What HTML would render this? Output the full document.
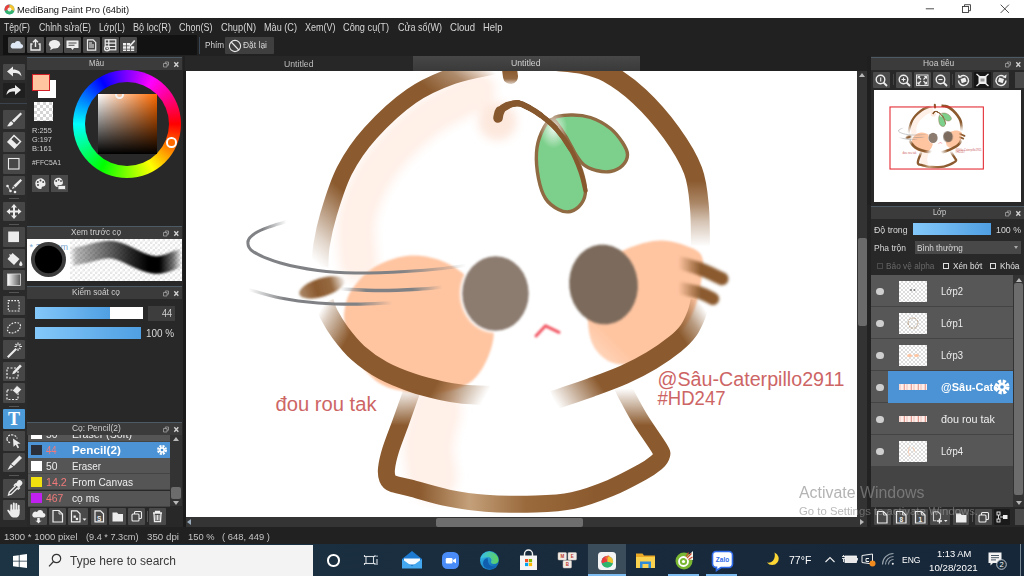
<!DOCTYPE html>
<html><head><meta charset="utf-8"><title>MediBang Paint Pro</title>
<style>
*{box-sizing:border-box;margin:0;padding:0}
html,body{width:1024px;height:576px;overflow:hidden;background:#222;font-family:"Liberation Sans",sans-serif;}
.a{position:absolute}
.t{position:absolute;white-space:nowrap;line-height:1}
#titlebar{left:0;top:0;width:1024px;height:18px;background:#fff}
#menubar{left:0;top:18px;width:1024px;height:18px;background:#212121}
#menubar span{position:absolute;top:4px;font-size:10.4px;color:#d8d8d8;white-space:nowrap;line-height:1;transform-origin:0 0}
#toolrow{left:0;top:35px;width:1024px;height:21px;background:#212121}
.tb{position:absolute;top:2px;width:17px;height:16px;background:#4a4a4a;border-radius:1px}
.hdr{position:absolute;height:13px;background:#3b3b3b;border-top:1px solid #4c5a66;color:#cfcfcf;font-size:10px;text-align:center;line-height:12px}
.hdr i{position:absolute;right:4px;top:1px;font-style:normal;font-size:8px;color:#ddd;letter-spacing:3px}
.panel{position:absolute;background:#282828}
.tool{position:absolute;left:3px;width:22px;height:19px;background:#474747;border-radius:1px}
.tool svg{position:absolute;left:0;top:0}
.tsep{position:absolute;left:9px;width:10px;height:1px;background:#555}
.brow{position:absolute;left:28px;width:142px;height:16px;background:#555;border-bottom:1px solid #444;font-size:11px;color:#eee;line-height:16px}
.brow b.sq{position:absolute;left:3px;top:2.5px;width:11px;height:10px}
.brow .n{position:absolute;left:18px}
.brow .nm{position:absolute;left:43.5px}
.sb{position:absolute;width:17px;height:16.5px;background:#4a4a4a;border-radius:1px}
.lrow{position:absolute;left:871px;width:142px;height:32px;background:#575757;border-bottom:1px solid #444;color:#eee;font-size:11.5px}
.lrow .eye{position:absolute;left:5px;top:12.5px;width:7.5px;height:7.5px;border-radius:50%;background:#cfcfcf}
.lrow .th{position:absolute;left:28px;top:5.5px;width:28px;height:21px;background-color:#fff;background-image:linear-gradient(45deg,#ddd 25%,transparent 25%,transparent 75%,#ddd 75%),linear-gradient(45deg,#ddd 25%,transparent 25%,transparent 75%,#ddd 75%);background-size:4px 4px;background-position:0 0,2px 2px}
.lrow .nm{position:absolute;left:70px;top:10px;line-height:1;white-space:nowrap}
.chk{background-color:#fff;background-image:linear-gradient(45deg,#d4d4d4 25%,transparent 25%,transparent 75%,#d4d4d4 75%),linear-gradient(45deg,#d4d4d4 25%,transparent 25%,transparent 75%,#d4d4d4 75%);background-size:6px 6px;background-position:0 0,3px 3px}
.tk{position:absolute;top:544px;height:32px}
</style></head><body>

<!-- ======= title bar ======= -->
<div class="a" id="titlebar">
  <svg class="a" style="left:4px;top:4px" width="11" height="11" viewBox="0 0 11 11"><circle cx="5.5" cy="5.5" r="5" fill="#2b9bd6"/><path d="M5.5 .5A5 5 0 0 0 .8 7L5.5 5.5Z" fill="#e8413a"/><path d="M5.5 .5A5 5 0 0 1 10.2 7L5.5 5.5Z" fill="#f4c430"/><path d="M.8 7A5 5 0 0 0 10.2 7L5.5 5.5Z" fill="#33b36b"/><circle cx="5.5" cy="5.5" r="2" fill="#fff" opacity=".85"/></svg>
  <div class="t" style="left:17.00px;top:4.61px;font-size:9.6px;color:#111;transform-origin:0 50%;transform:scaleX(0.9723);">MediBang Paint Pro (64bit)</div>
  <svg class="a" style="left:900px;top:0" width="124" height="18" viewBox="900 0 124 18" fill="none" stroke="#3a3a3a" stroke-width="0.9"><path d="M925.8 8.800h8.200"/><rect x="962.500" y="6.500" width="6" height="6"/><path d="M964.500 6.500v-1.800h6v6h-2"/><path d="M1000.700 4.700l8.200 8.200M1008.900 4.700l-8.200 8.200"/></svg>
</div>

<!-- ======= menu bar ======= -->
<div class="a" id="menubar"><div class="t" style="left:4.00px;top:3.52px;font-size:10.6px;color:#d6d6d6;transform-origin:0 50%;transform:scaleX(0.8181);">Tệp(F)</div><div class="t" style="left:38.50px;top:3.52px;font-size:10.6px;color:#d6d6d6;transform-origin:0 50%;transform:scaleX(0.8250);">Chỉnh sửa(E)</div><div class="t" style="left:98.50px;top:3.52px;font-size:10.6px;color:#d6d6d6;transform-origin:0 50%;transform:scaleX(0.8205);">Lớp(L)</div><div class="t" style="left:132.50px;top:3.52px;font-size:10.6px;color:#d6d6d6;transform-origin:0 50%;transform:scaleX(0.8606);">Bộ lọc(R)</div><div class="t" style="left:178.50px;top:3.52px;font-size:10.6px;color:#d6d6d6;transform-origin:0 50%;transform:scaleX(0.8491);">Chọn(S)</div><div class="t" style="left:220.50px;top:3.52px;font-size:10.6px;color:#d6d6d6;transform-origin:0 50%;transform:scaleX(0.8740);">Chụp(N)</div><div class="t" style="left:263.50px;top:3.52px;font-size:10.6px;color:#d6d6d6;transform-origin:0 50%;transform:scaleX(0.8624);">Màu (C)</div><div class="t" style="left:304.50px;top:3.52px;font-size:10.6px;color:#d6d6d6;transform-origin:0 50%;transform:scaleX(0.8494);">Xem(V)</div><div class="t" style="left:343.00px;top:3.52px;font-size:10.6px;color:#d6d6d6;transform-origin:0 50%;transform:scaleX(0.8682);">Công cụ(T)</div><div class="t" style="left:397.50px;top:3.52px;font-size:10.6px;color:#d6d6d6;transform-origin:0 50%;transform:scaleX(0.8490);">Cửa sổ(W)</div><div class="t" style="left:449.50px;top:3.52px;font-size:10.6px;color:#d6d6d6;transform-origin:0 50%;transform:scaleX(0.9029);">Cloud</div><div class="t" style="left:483.00px;top:3.52px;font-size:10.6px;color:#d6d6d6;transform-origin:0 50%;transform:scaleX(0.8946);">Help</div></div>

<!-- ======= tool row ======= -->
<div class="a" id="toolrow">
  <div class="a" style="left:3px;top:0;width:194px;height:20px;background:#121212"></div>
  <div class="tb" style="left:8px"><svg width="17" height="16" viewBox="0 0 17 16"><path d="M4.5 11.5h8.2a2.3 2.3 0 0 0 .3-4.6a3.3 3.3 0 0 0-6.3-.8a2.7 2.7 0 0 0-2.2 5.4z" fill="#dfe9f5"/></svg></div>
  <div class="tb" style="left:27px"><svg width="17" height="16" viewBox="0 0 17 16" fill="none" stroke="#eee" stroke-width="1.4"><path d="M5.5 7H4v6h9V7h-1.5M8.5 10V3M6 5.2l2.5-2.5L11 5.2"/></svg></div>
  <div class="tb" style="left:46px"><svg width="17" height="16" viewBox="0 0 17 16"><ellipse cx="8.5" cy="7.3" rx="5.6" ry="4.2" fill="#eee"/><path d="M5 10l-.8 3.2L8 11z" fill="#eee"/></svg></div>
  <div class="tb" style="left:64px"><svg width="17" height="16" viewBox="0 0 17 16"><path d="M2.5 3.5h12v7.5h-4.5L8.5 13L7 11H2.5z" fill="#eee"/><path d="M4.5 6h8M4.5 8.3h6" stroke="#4a4a4a" stroke-width="1.1"/></svg></div>
  <div class="tb" style="left:83px"><svg width="17" height="16" viewBox="0 0 17 16"><path d="M4.5 2.8h5.6l2.6 2.6v7.8H4.5z" fill="none" stroke="#eee" stroke-width="1.2"/><path d="M6 8h5M6 10h5M6 6h3" stroke="#eee" stroke-width="1"/></svg></div>
  <div class="tb" style="left:102px"><svg width="17" height="16" viewBox="0 0 17 16" fill="none" stroke="#eee" stroke-width="1.2"><rect x="3.2" y="2.8" width="10.6" height="10"/><path d="M3.2 6.2h10.6M3.2 9.5h10.6M6.8 2.8v10"/><circle cx="5" cy="11.5" r="2.4" fill="#4a4a4a"/><path d="M5 10.3v1.3h1"/></svg></div>
  <div class="tb" style="left:120px"><svg width="17" height="16" viewBox="0 0 17 16"><path d="M3 6h3.2v2.4H3zM7 6h3.2v2.4H7zM3 9.3h3.2v2.4H3zM7 9.3h3.2v2.4H7zM3 12.6h3.2v1.4H3zM7 12.6h3.2v1.4H7zM11 9.3h3.2v2.4H11zM11 12.6h3.2v1.4H11z" fill="#eee"/><path d="M9.5 8.2l4.6-5.3 1.2 1-4.6 5.3-1.6.5z" fill="#eee"/></svg></div>
  <div class="a" style="left:198.5px;top:2px;width:1.5px;height:17px;background:#3a4856"></div>
  <div class="t" style="left:205.00px;top:5.41px;font-size:9.4px;color:#d5d5d5;transform-origin:0 50%;transform:scaleX(0.8680);">Phím</div>
  <div class="a" style="left:225px;top:2px;width:49px;height:16.5px;background:#3f3f3f;border-radius:1px">
    <svg class="a" style="left:3px;top:1.5px" width="14" height="14" viewBox="0 0 14 14" fill="none" stroke="#e8e8e8" stroke-width="1.1"><circle cx="7" cy="7" r="5.6"/><path d="M3.2 3L10.8 11"/></svg>
    <div class="t" style="left:18.00px;top:3.60px;font-size:9.0px;color:#d5d5d5;transform-origin:0 50%;transform:scaleX(0.9406);">Đặt lại</div>
  </div>
</div>

<!-- tab strip -->
<div class="a" style="left:0;top:56px;width:1024px;height:15px;background:#212121"></div>
<div class="a" style="left:185px;top:56px;width:228px;height:15px;background:#272727;"><div class="t" style="left:99.00px;top:3.60px;font-size:9.0px;color:#bdbdbd;transform-origin:0 50%;transform:scaleX(0.9667);">Untitled</div></div>
<div class="a" style="left:413px;top:56px;width:227px;height:15px;background:linear-gradient(#474747,#3a3a3a);"><div class="t" style="left:98.00px;top:3.10px;font-size:9.0px;color:#d0d0d0;transform-origin:0 50%;transform:scaleX(0.9667);">Untitled</div></div>

<!-- ======= left tool column ======= -->
<div class="panel" style="left:0;top:56px;width:27px;height:471px;background:#2a2a2a" id="tools">
<div class="tool" style="top:7.799999999999997px;height:16.6px;background:#474747"><svg width="22" height="16.6" viewBox="0 1.5 22 16.6"><path d="M4 9l6-5v3c5 0 8 2 8.500 7c-2-3-4.500-3.500-8.500-3.500v3.500z" fill="#ececec"/></svg></div>
<div class="tool" style="top:26.799999999999997px;height:15.6px;background:#1f1f1f"><svg width="22" height="15.6" viewBox="0 2 22 15.6"><path d="M18 9l-6-5v3c-5 0-8 2-8.500 7c2-3 4.500-3.500 8.500-3.500v3.500z" fill="#ececec"/></svg></div>
<div class="tool" style="top:53.5px;height:19.5px;background:#474747"><svg width="22" height="19.5" viewBox="0 0 22 19.5"><path d="M17.500 2.500l1.500 1.500-8 8.500-2-2z" fill="#ececec"/><path d="M8.300 11.200l2 2c-1 2.500-3.500 3.300-6.300 3 1.500-1 1.500-3.500 4.300-5z" fill="#ececec"/></svg></div>
<div class="tool" style="top:76px;height:19.5px;background:#474747"><svg width="22" height="19.5" viewBox="0 0 22 19.5"><path d="M11 3.500l6.500 6-6 6.500-6.500-6z" fill="none" stroke="#ececec" stroke-width="1.500"/><path d="M8 7l6.500 6-3 3-6.500-6z" fill="#ececec"/></svg></div>
<div class="tool" style="top:98px;height:19.5px;background:#474747"><svg width="22" height="19.5" viewBox="0 0 22 19.5"><rect x="5.500" y="4.500" width="10.500" height="10.500" fill="none" stroke="#ececec" stroke-width="1.100"/></svg></div>
<div class="tool" style="top:119.5px;height:19.5px;background:#474747"><svg width="22" height="19.5" viewBox="0 0 22 19.5"><path d="M17.500 3l1.500 1.500-6.500 7-2-2z" fill="#ececec"/><path d="M10 10.300l1.800 1.800-2.800 1z" fill="#ececec"/><circle cx="4.500" cy="10" r="1.300" fill="#ececec"/><circle cx="7.500" cy="15" r="1.300" fill="#ececec"/><circle cx="12" cy="16" r="1.300" fill="#ececec"/><path d="M4.500 10l3 5" stroke="#ececec" stroke-width=".7"/></svg></div>
<div class="tool" style="top:145.5px;height:19.5px;background:#474747"><svg width="22" height="19.5" viewBox="0 0 22 19.5"><path d="M11 2l3 3.500h-2v3h3v-2l3.500 3-3.500 3v-2h-3v3h2l-3 3.500-3-3.500h2v-3h-3v2l-3.500-3 3.500-3v2h3v-3h-2z" fill="#ececec"/></svg></div>
<div class="tool" style="top:171px;height:19.5px;background:#474747"><svg width="22" height="19.5" viewBox="0 0 22 19.5"><rect x="5.200" y="4.500" width="10.800" height="10.600" fill="#ececec"/></svg></div>
<div class="tool" style="top:192.5px;height:19.5px;background:#474747"><svg width="22" height="19.5" viewBox="0 0 22 19.5"><path d="M9.500 4l7 6-5.500 6-6.500-6z" fill="#ececec"/><path d="M6.500 5.500l4 3.500" stroke="#ececec" stroke-width="1.200" fill="none"/><path d="M17.800 12c1 1.600 1.600 2.600 1.600 3.400a1.600 1.600 0 0 1-3.200 0c0-.8.600-1.800 1.600-3.400z" fill="#ececec"/></svg></div>
<div class="tool" style="top:214px;height:19.5px;background:#474747"><svg width="22" height="19.5" viewBox="0 0 22 19.5"><defs><linearGradient id="tg"><stop offset="0" stop-color="#fff"/><stop offset="1" stop-color="#555"/></linearGradient></defs><rect x="4.500" y="4" width="13" height="11.500" fill="url(#tg)" stroke="#ddd" stroke-width=".8"/></svg></div>
<div class="tool" style="top:239.8px;height:19.5px;background:#474747"><svg width="22" height="19.5" viewBox="0 0 22 19.5"><rect x="5.300" y="4.600" width="10.800" height="10.400" fill="none" stroke="#ececec" stroke-width="1.150" stroke-dasharray="1.700 1.300"/></svg></div>
<div class="tool" style="top:261.8px;height:19.5px;background:#474747"><svg width="22" height="19.5" viewBox="0 0 22 19.5"><ellipse cx="11" cy="9.800" rx="7" ry="4.600" transform="rotate(-28 11 9.800)" fill="none" stroke="#ececec" stroke-width="1.150" stroke-dasharray="1.700 1.300"/></svg></div>
<div class="tool" style="top:283.8px;height:19.5px;background:#474747"><svg width="22" height="19.5" viewBox="0 0 22 19.5"><path d="M4 16.500l8.500-8.500 1.500 1.500-8.500 8.500z" fill="#ececec"/><path d="M15 2.500v3M15 8.500v2.500M11.500 6.500h2.300M16.500 6.500h2.500M12.500 4l1.300 1.300M17.500 4l-1.300 1.300M17.500 9.200l-1.300-1.300" stroke="#ececec" stroke-width="1.100"/></svg></div>
<div class="tool" style="top:305.5px;height:19.5px;background:#474747"><svg width="22" height="19.5" viewBox="0 0 22 19.5"><rect x="4" y="6" width="11" height="10" fill="none" stroke="#ececec" stroke-width="1.200" stroke-dasharray="2 1.500"/><path d="M17 2.500l1.800 1.800-7 7.200-2.600.8.800-2.600z" fill="#ececec"/></svg></div>
<div class="tool" style="top:327.3px;height:19.5px;background:#474747"><svg width="22" height="19.5" viewBox="0 0 22 19.5"><rect x="4" y="7" width="11" height="9.500" fill="none" stroke="#ececec" stroke-width="1.200" stroke-dasharray="2 1.500"/><path d="M14 2.500l4.500 4-4.500 5-4.500-4z" fill="#ececec" stroke="#474747" stroke-width=".6"/></svg></div>
<div class="tool" style="top:353px;height:19.5px;background:#4d9ad9"><svg width="22" height="19.5" viewBox="0 0 22 19.5"><text x="11" y="16" text-anchor="middle" font-family="Liberation Serif, serif" font-weight="bold" font-size="18" fill="#fff">T</text></svg></div>
<div class="tool" style="top:375px;height:19.5px;background:#474747"><svg width="22" height="19.5" viewBox="0 0 22 19.5"><path d="M4 8c0-3 3-4.500 6-4 2.500.5 4 2 4 3.500" fill="none" stroke="#ececec" stroke-width="1.200" stroke-dasharray="2 1.200"/><path d="M4 8c0 2 1.500 3.500 4 4" fill="none" stroke="#ececec" stroke-width="1.200" stroke-dasharray="2 1.200"/><path d="M10 7.500l7.500 5-3.200.5 1.800 3.500-1.500.7-1.800-3.500-2.300 2z" fill="#ececec"/></svg></div>
<div class="tool" style="top:396.5px;height:19.5px;background:#474747"><svg width="22" height="19.5" viewBox="0 0 22 19.5"><path d="M16.500 2.500l2.500 2.500-8 8-3-2z" fill="#ececec"/><path d="M7.500 11.500l2.700 2.200-5.700 3.300z" fill="#ececec"/></svg></div>
<div class="tool" style="top:422.5px;height:19.5px;background:#474747"><svg width="22" height="19.5" viewBox="0 0 22 19.5"><path d="M15 2.500a2 2 0 0 1 3 3l-2.500 2.500 1 1-1.200 1.200-1-1-6 6-2.800.8.800-2.800 6-6-1-1 1.200-1.200 1 1z" fill="none" stroke="#ececec" stroke-width="1.300"/><path d="M15 2.500a2 2 0 0 1 3 3l-2.800 2.800-3-3z" fill="#ececec"/></svg></div>
<div class="tool" style="top:444px;height:19.5px;background:#474747"><svg width="22" height="19.5" viewBox="0 0 22 19.5"><path d="M8.300 10V5.200M10.800 10V3.400M13.300 10V3.900M15.700 10V5.800" stroke="#ececec" stroke-width="1.900" stroke-linecap="round" fill="none"/><path d="M7.300 9.500h9.400v3.300c0 2.600-1.500 4.700-3 4.700h-3.500c-1.200 0-2.300-1-3.200-2.500l-2.600-4c-.6-1 .6-1.900 1.500-1l1.400 1.600z" fill="#ececec"/></svg></div>
<div class="a" style="left:0;top:47px;width:27px;height:1px;background:#3b444e"></div><div class="tsep" style="top:142px"></div><div class="tsep" style="top:167.5px"></div><div class="tsep" style="top:235.5px"></div><div class="tsep" style="top:349.5px"></div><div class="tsep" style="top:419px"></div>
</div>

<!-- ======= colour panel ======= -->
<div class="panel" style="left:27px;top:56px;width:156px;height:169px"></div>
<div class="hdr" style="left:27px;top:56.5px;width:155px"><div class="t" style="left:61.80px;top:1.76px;font-size:9.3px;color:#cfcfcf;transform-origin:0 50%;transform:scaleX(0.8290);">Màu</div><svg class="a" style="right:1px;top:2px" width="20" height="9" viewBox="0 0 20 9"><path d="M2.500 3.500h3.500v3.500h-3.500zM4.300 3.500v-1.500h3.200v3.200h-1.500" fill="none" stroke="#a8a8a8" stroke-width=".75"/><path d="M13.300 2.300l4 4.400M17.300 2.300l-4 4.400" stroke="#d2d2d2" stroke-width="1.350"/></svg></div>
<div class="a" style="left:38px;top:80px;width:17.5px;height:17.5px;background:#fff"></div>
<div class="a" style="left:31.5px;top:73.5px;width:18px;height:17.5px;background:#ffc5a1;border:1.6px solid #d22028"></div>
<div class="a chk" style="left:34px;top:102px;width:19px;height:19px"></div>
<div class="t" style="left:31.80px;top:127.09px;font-size:8.0px;color:#cfcfcf;transform-origin:0 50%;transform:scaleX(0.9317);">R:255</div><div class="t" style="left:31.80px;top:136.09px;font-size:8.0px;color:#cfcfcf;transform-origin:0 50%;transform:scaleX(0.9130);">G:197</div><div class="t" style="left:31.80px;top:145.09px;font-size:8.0px;color:#cfcfcf;transform-origin:0 50%;transform:scaleX(0.9519);">B:161</div>
<div class="t" style="left:32.30px;top:158.89px;font-size:7.6px;color:#cfcfcf;transform-origin:0 50%;transform:scaleX(0.8923);">#FFC5A1</div>
<div class="a" style="left:32px;top:174.5px;width:17px;height:17px;background:#4a4a4a"><svg width="17" height="17" viewBox="0 0 17 17"><path d="M8.7 3.2a5.4 5.4 0 1 0 0 10.8c1.5 0 .6-1.4 1.2-2.1.8-.9 3.6.3 3.6-3.2 0-3.2-2.4-5.5-4.8-5.5z" fill="#eee"/><circle cx="5.8" cy="7" r="1" fill="#4a4a4a"/><circle cx="8.5" cy="5.6" r="1" fill="#4a4a4a"/><circle cx="11.2" cy="7" r="1" fill="#4a4a4a"/><circle cx="6" cy="10" r="1" fill="#4a4a4a"/></svg></div>
<div class="a" style="left:51px;top:174.5px;width:17px;height:17px;background:#4a4a4a"><svg width="17" height="17" viewBox="0 0 17 17"><path d="M7.7 2.7a4.8 4.8 0 1 0 0 9.6c1.3 0 .5-1.2 1-1.9.7-.8 3.2.3 3.2-2.8 0-2.9-2.1-4.9-4.2-4.9z" fill="#eee"/><circle cx="5.2" cy="6" r=".9" fill="#4a4a4a"/><circle cx="7.6" cy="4.8" r=".9" fill="#4a4a4a"/><circle cx="10" cy="6" r=".9" fill="#4a4a4a"/><rect x="7" y="10.5" width="7.5" height="4" fill="#eee" stroke="#4a4a4a" stroke-width=".7"/></svg></div>
<!-- wheel -->
<div class="a" style="left:73px;top:69.8px;width:108px;height:108px;border-radius:50%;background:conic-gradient(from 90deg,#f00,#ff0,#0f0,#0ff,#00f,#f0f,#f00)"></div>
<div class="a" style="left:84.8px;top:81.6px;width:84.4px;height:84.4px;border-radius:50%;background:#282828"></div>
<div class="a" style="left:97.5px;top:94px;width:59.5px;height:59.5px;overflow:hidden;background:linear-gradient(to bottom,rgba(0,0,0,0),#000),linear-gradient(to right,#fff,#ff6a00)"><div class="a" style="left:17.3px;top:-4.2px;width:9.6px;height:9.6px;border-radius:50%;border:2px solid #f2f2f2"></div></div>
<div class="a" style="left:166px;top:137px;width:10.5px;height:10.5px;border-radius:50%;border:2.2px solid #fff;background:#ff6a00"></div>

<!-- ======= brush preview ======= -->
<div class="panel" style="left:27px;top:225px;width:156px;height:60px"></div>
<div class="hdr" style="left:27px;top:225.5px;width:155px"><div class="t" style="left:44.00px;top:1.76px;font-size:9.3px;color:#cfcfcf;transform-origin:0 50%;transform:scaleX(0.8811);">Xem trước cọ</div><svg class="a" style="right:1px;top:2px" width="20" height="9" viewBox="0 0 20 9"><path d="M2.500 3.500h3.500v3.500h-3.500zM4.300 3.500v-1.500h3.200v3.200h-1.500" fill="none" stroke="#a8a8a8" stroke-width=".75"/><path d="M13.300 2.300l4 4.400M17.300 2.300l-4 4.400" stroke="#d2d2d2" stroke-width="1.350"/></svg></div>
<div class="a" style="left:27px;top:238.5px;width:155px;height:42.5px;background:#fff"></div>
<div class="a chk" style="left:69.5px;top:238.5px;width:112.5px;height:42.5px;background-size:5px 5px;background-position:0 0,2.5px 2.5px;background-image:linear-gradient(45deg,#e6e6e6 25%,transparent 25%,transparent 75%,#e6e6e6 75%),linear-gradient(45deg,#e6e6e6 25%,transparent 25%,transparent 75%,#e6e6e6 75%)"></div>
<svg class="a" style="left:27px;top:238px" width="156" height="44" viewBox="27 238 156 44">
  <defs><linearGradient id="bs" gradientUnits="userSpaceOnUse" x1="70" y1="0" x2="182" y2="0"><stop offset="0" stop-color="#000" stop-opacity="0"/><stop offset=".06" stop-color="#000" stop-opacity=".28"/><stop offset=".3" stop-color="#000" stop-opacity=".55"/><stop offset=".52" stop-color="#000" stop-opacity=".82"/><stop offset=".7" stop-color="#000" stop-opacity="1"/><stop offset=".8" stop-color="#000" stop-opacity="1"/><stop offset=".92" stop-color="#000" stop-opacity=".55"/><stop offset="1" stop-color="#000" stop-opacity="0"/></linearGradient><filter id="bsb" filterUnits="userSpaceOnUse" x="60" y="225" width="130" height="70"><feGaussianBlur stdDeviation="1.1"/></filter></defs>
  <text x="29.5" y="249.5" font-size="9" fill="#7ea8d0" font-family="Liberation Sans, sans-serif" textLength="38.5" lengthAdjust="spacingAndGlyphs">* 3.23mm</text>
  <circle cx="48.5" cy="259.5" r="17.5" fill="#3c3c3c"/><circle cx="48.5" cy="259.5" r="13.7" fill="#000"/>
  <path d="M71 257.5C76 256 80 255.5 85 254.5C93 252.5 101 249.3 110 249.5C118 249.7 125 253.5 132 257C139 260.5 146 264 153.7 264.8C161 265.5 167 263.5 172.5 261C176 259.5 179 258.5 182 258" fill="none" stroke="url(#bs)" stroke-width="17.5" filter="url(#bsb)"/>
</svg>

<!-- ======= brush control ======= -->
<div class="panel" style="left:27px;top:285px;width:156px;height:136px"></div>
<div class="hdr" style="left:27px;top:285.5px;width:155px"><div class="t" style="left:45.20px;top:1.76px;font-size:9.3px;color:#cfcfcf;transform-origin:0 50%;transform:scaleX(0.8930);">Kiểm soát cọ</div><svg class="a" style="right:1px;top:2px" width="20" height="9" viewBox="0 0 20 9"><path d="M2.500 3.500h3.500v3.500h-3.500zM4.300 3.500v-1.500h3.200v3.200h-1.500" fill="none" stroke="#a8a8a8" stroke-width=".75"/><path d="M13.300 2.300l4 4.400M17.300 2.300l-4 4.400" stroke="#d2d2d2" stroke-width="1.350"/></svg></div>
<div class="a" style="left:34.5px;top:306.5px;width:108px;height:12.5px;background:#fff"></div>
<div class="a" style="left:34.5px;top:306.5px;width:75.5px;height:12.5px;background:linear-gradient(to right,#84c8fa,#4f9fe2)"></div>
<div class="a" style="left:147.5px;top:305.5px;width:27.5px;height:15.5px;background:#3d3d3d;"><div class="t" style="left:14.00px;top:2.87px;font-size:10.5px;color:#d0d0d0;transform-origin:0 50%;transform:scaleX(0.8727);">44</div></div>
<div class="a" style="left:34.5px;top:327px;width:106.5px;height:12px;background:linear-gradient(to right,#84c8fa,#4f9fe2)"></div>
<div class="t" style="left:146.20px;top:327.82px;font-size:10.6px;color:#d8d8d8;transform-origin:0 50%;transform:scaleX(0.9385);">100 %</div>

<!-- ======= brush list ======= -->
<div class="panel" style="left:27px;top:421px;width:156px;height:106px"></div>
<div class="hdr" style="left:27px;top:421.5px;width:155px"><div class="t" style="left:44.70px;top:1.76px;font-size:9.3px;color:#cfcfcf;transform-origin:0 50%;transform:scaleX(0.9082);">Cọ: Pencil(2)</div><svg class="a" style="right:1px;top:2px" width="20" height="9" viewBox="0 0 20 9"><path d="M2.500 3.500h3.500v3.500h-3.500zM4.300 3.500v-1.500h3.200v3.200h-1.500" fill="none" stroke="#a8a8a8" stroke-width=".75"/><path d="M13.300 2.300l4 4.400M17.300 2.300l-4 4.400" stroke="#d2d2d2" stroke-width="1.350"/></svg></div>
<div class="brow" style="top:426px;height:16px;clip-path:inset(9px 0 0 0)"><b class="sq" style="background:#fff"></b><div class="t" style="left:18.00px;top:2.63px;font-size:11.0px;color:#eee;transform-origin:0 50%;transform:scaleX(0.9388);">50</div><div class="t" style="left:43.70px;top:2.63px;font-size:11.0px;color:#eee;transform-origin:0 50%;transform:scaleX(0.9622);">Eraser (Soft)</div></div>
<div class="brow" style="top:442px;background:#4b93d4;border-color:#4b93d4"><b class="sq" style="background:#2b2f3a"></b><div class="t" style="left:18.00px;top:2.93px;font-size:11.0px;color:#f07a7a;transform-origin:0 50%;transform:scaleX(0.8653);">44</div><div class="t" style="left:43.70px;top:2.93px;font-size:11.0px;color:#fff;font-weight:bold;transform-origin:0 50%;transform:scaleX(1.0641);">Pencil(2)</div>
  <svg class="a" style="left:127.5px;top:2px" width="12" height="12" viewBox="0 0 12 12"><circle cx="6" cy="6" r="3.6" fill="none" stroke="#fff" stroke-width="2.8" stroke-dasharray="1.9 0.93"/><circle cx="6" cy="6" r="2.8" fill="#fff"/><circle cx="6" cy="6" r="1.3" fill="#4b93d4"/></svg></div>
<div class="brow" style="top:458.3px"><b class="sq" style="background:#fff"></b><div class="t" style="left:18.00px;top:2.93px;font-size:11.0px;color:#eee;transform-origin:0 50%;transform:scaleX(0.9388);">50</div><div class="t" style="left:43.70px;top:2.93px;font-size:11.0px;color:#eee;transform-origin:0 50%;transform:scaleX(0.8949);">Eraser</div></div>
<div class="brow" style="top:474.4px"><b class="sq" style="background:#f0e010"></b><div class="t" style="left:18.00px;top:2.93px;font-size:11.0px;color:#f07a7a;transform-origin:0 50%;transform:scaleX(0.9710);">14.2</div><div class="t" style="left:43.70px;top:2.93px;font-size:11.0px;color:#eee;transform-origin:0 50%;transform:scaleX(0.9238);">From Canvas</div></div>
<div class="brow" style="top:490.5px"><b class="sq" style="background:#c020f0"></b><div class="t" style="left:18.00px;top:2.93px;font-size:11.0px;color:#f07a7a;transform-origin:0 50%;transform:scaleX(0.9477);">467</div><div class="t" style="left:43.70px;top:2.93px;font-size:11.0px;color:#eee;transform-origin:0 50%;transform:scaleX(0.9304);">cọ ms</div></div>
<div class="a" style="left:170px;top:435px;width:12px;height:71px;background:#333"></div>
<div class="a" style="left:171px;top:487px;width:10px;height:12px;background:#6c6c6c;border-radius:2px"></div>
<div class="a" style="left:173px;top:437px;width:0;height:0;border-left:3px solid transparent;border-right:3px solid transparent;border-bottom:4px solid #b8b8b8"></div>
<div class="a" style="left:173px;top:501px;width:0;height:0;border-left:3px solid transparent;border-right:3px solid transparent;border-top:4px solid #b8b8b8"></div>
<div class="sb" style="left:30px;top:508px;width:17px;height:16.5px;background:#4a4a4a"><svg width="17" height="16.5" viewBox="0 0 17 16.5"><path d="M4 9.500h9a2.300 2.300 0 0 0 .300-4.600a3.300 3.300 0 0 0-6.300-.8a2.700 2.700 0 0 0-3 5.400z" fill="#eee"/><path d="M7 9.500h3v3h2l-3.500 3-3.500-3h2z" fill="#eee" stroke="#4a4a4a" stroke-width=".5"/></svg></div>
<div class="sb" style="left:49px;top:508px;width:17px;height:16.5px;background:#4a4a4a"><svg width="17" height="16.5" viewBox="0 0 17 16.5"><path d="M4 2.500h6l3.500 3.500v8h-9.500z" fill="none" stroke="#eee" stroke-width="1.200"/><path d="M10 2.500v3.500h3.500" fill="none" stroke="#eee" stroke-width=".8"/></svg></div>
<div class="sb" style="left:68px;top:508px;width:20px;height:16.5px;background:#4a4a4a"><svg width="20" height="16.5" viewBox="0 0 20 16.5"><path d="M3.500 2.800h5.500l3 3v8h-8.500z" fill="none" stroke="#eee" stroke-width="1.200"/><rect x="5.500" y="7.500" width="2.300" height="2.300" fill="#eee"/><rect x="7.800" y="9.800" width="2.300" height="2.300" fill="#eee"/><path d="M14.500 10.500h4l-2 2.300z" fill="#eee"/></svg></div>
<div class="sb" style="left:90.5px;top:508px;width:16px;height:16.5px;background:#4a4a4a"><svg width="16" height="16.5" viewBox="0 0 16 16.5"><path d="M4 2.800h5.500l3 3v8h-8.500z" fill="none" stroke="#eee" stroke-width="1.200"/><text x="8.200" y="12.500" text-anchor="middle" font-size="6.500" font-family="Liberation Sans, sans-serif" font-weight="bold" fill="#eee">S</text></svg></div>
<div class="sb" style="left:109px;top:508px;width:17px;height:16.5px;background:#4a4a4a"><svg width="17" height="16.5" viewBox="0 0 17 16.5"><path d="M3.500 4.500h4.500l1.300 1.500h4.700v7.500h-10.500z" fill="#eee"/></svg></div>
<div class="sb" style="left:127.5px;top:508px;width:17px;height:16.5px;background:#4a4a4a"><svg width="17" height="16.5" viewBox="0 0 17 16.5"><rect x="6.500" y="3.500" width="7" height="7" fill="none" stroke="#eee" stroke-width="1.100" rx="1"/><rect x="4" y="6" width="7" height="7" fill="#4a4a4a" stroke="#eee" stroke-width="1.100" rx="1"/></svg></div>
<div class="a" style="left:146.500px;top:511px;width:1px;height:11px;background:#555"></div><div class="sb" style="left:149px;top:508px;width:17px;height:16.5px;background:#4a4a4a"><svg width="17" height="16.5" viewBox="0 0 17 16.5"><path d="M4 5h9M6.500 5v-1.500h4v1.500M5 5.500l.5 8h6l.5-8" fill="none" stroke="#eee" stroke-width="1.300"/><path d="M7 7v5M8.500 7v5M10 7v5" stroke="#eee" stroke-width=".9"/></svg></div>


<!-- ======= canvas ======= -->
<div class="a" style="left:183px;top:71px;width:2.5px;height:456px;background:#1b1b1b"></div>
<div class="a" style="left:185.5px;top:70.5px;width:671.5px;height:446.5px;background:#fff;overflow:hidden">
<svg class="a" style="left:0;top:0" width="671.5" height="446.5" viewBox="185.5 70.5 671.5 446.5">
<defs><linearGradient id="rcheek" gradientUnits="userSpaceOnUse" x1="585" y1="365" x2="640" y2="310"><stop offset="0" stop-color="#ffc5a1" stop-opacity="0.55"/><stop offset="0.5" stop-color="#ffc5a1"/></linearGradient><linearGradient id="g1" gradientUnits="userSpaceOnUse" x1="319.5" y1="266" x2="497" y2="65"><stop offset="0" stop-color="#8b5a2e" stop-opacity="0"/><stop offset="0.08" stop-color="#8b5a2e" stop-opacity="0.25"/><stop offset="0.27" stop-color="#8b5a2e" stop-opacity="1"/><stop offset="0.76" stop-color="#8b5a2e" stop-opacity="1"/><stop offset="0.87" stop-color="#8b5a2e" stop-opacity="0.7"/><stop offset="0.975" stop-color="#8b5a2e" stop-opacity="0"/></linearGradient><linearGradient id="g2" gradientUnits="userSpaceOnUse" x1="0" y1="180" x2="0" y2="246"><stop offset="0" stop-color="#8b5a2e" stop-opacity="1"/><stop offset="0.35" stop-color="#8b5a2e" stop-opacity="0.72"/><stop offset="0.62" stop-color="#8b5a2e" stop-opacity="0.36"/><stop offset="1" stop-color="#8b5a2e" stop-opacity="0"/></linearGradient><linearGradient id="g3" gradientUnits="userSpaceOnUse" x1="324" y1="302" x2="490" y2="395"><stop offset="0" stop-color="#8b5a2e" stop-opacity="0"/><stop offset="0.05" stop-color="#8b5a2e" stop-opacity="0.3"/><stop offset="0.2" stop-color="#8b5a2e" stop-opacity="1"/><stop offset="0.72" stop-color="#8b5a2e" stop-opacity="1"/><stop offset="0.98" stop-color="#8b5a2e" stop-opacity="0"/></linearGradient><linearGradient id="g4" gradientUnits="userSpaceOnUse" x1="553" y1="399.5" x2="699.5" y2="301"><stop offset="0" stop-color="#8b5a2e" stop-opacity="0"/><stop offset="0.27" stop-color="#8b5a2e" stop-opacity="1"/><stop offset="0.8" stop-color="#8b5a2e" stop-opacity="1"/><stop offset="0.9" stop-color="#8b5a2e" stop-opacity="0.6"/><stop offset="1" stop-color="#8b5a2e" stop-opacity="0"/></linearGradient><linearGradient id="g5" gradientUnits="userSpaceOnUse" x1="385" y1="0" x2="665" y2="0"><stop offset="0" stop-color="#8b5a2e" stop-opacity="1"/><stop offset="0.12" stop-color="#8b5a2e" stop-opacity="1"/><stop offset="0.3" stop-color="#c4a07a" stop-opacity="1"/><stop offset="0.5" stop-color="#9a6a3c" stop-opacity="1"/><stop offset="0.75" stop-color="#8b5a2e" stop-opacity="1"/><stop offset="1" stop-color="#8b5a2e" stop-opacity="1"/></linearGradient><linearGradient id="bodym" gradientUnits="userSpaceOnUse" x1="0" y1="388" x2="0" y2="425"><stop offset="0" stop-color="#000"/><stop offset="1" stop-color="#fff"/></linearGradient><mask id="bm" maskUnits="userSpaceOnUse" x="300" y="300" width="500" height="300"><rect x="300" y="300" width="500" height="300" fill="url(#bodym)"/></mask><radialGradient id="hl"><stop offset="0" stop-color="#fff" stop-opacity="0.85"/><stop offset="1" stop-color="#fff" stop-opacity="0"/></radialGradient><linearGradient id="g6" gradientUnits="userSpaceOnUse" x1="0" y1="70" x2="0" y2="84"><stop offset="0" stop-color="#8a5a2e" stop-opacity="1"/><stop offset="0.6" stop-color="#8a5a2e" stop-opacity="0.9"/><stop offset="1" stop-color="#8a5a2e" stop-opacity="0.2"/></linearGradient><linearGradient id="blob" gradientUnits="userSpaceOnUse" x1="300" y1="0" x2="345" y2="0"><stop offset="0" stop-color="#8b5a2e" stop-opacity="0.75"/><stop offset="0.35" stop-color="#8b5a2e"/><stop offset="0.7" stop-color="#8b5a2e" stop-opacity="0.9"/><stop offset="1" stop-color="#8b5a2e" stop-opacity="0.1"/></linearGradient><linearGradient id="g7" gradientUnits="userSpaceOnUse" x1="262" y1="0" x2="286" y2="0"><stop offset="0" stop-color="#7f8184" stop-opacity="1"/><stop offset="1" stop-color="#7f8184" stop-opacity="0"/></linearGradient><linearGradient id="g8" gradientUnits="userSpaceOnUse" x1="400" y1="0" x2="466" y2="0"><stop offset="0" stop-color="#7f8184" stop-opacity="1"/><stop offset="1" stop-color="#7f8184" stop-opacity="0"/></linearGradient><linearGradient id="g9" gradientUnits="userSpaceOnUse" x1="340" y1="0" x2="442" y2="0"><stop offset="0" stop-color="#7f8184" stop-opacity="0"/><stop offset="0.25" stop-color="#7f8184" stop-opacity="1"/><stop offset="0.7" stop-color="#7f8184" stop-opacity="1"/><stop offset="1" stop-color="#7f8184" stop-opacity="0"/></linearGradient><linearGradient id="g10" gradientUnits="userSpaceOnUse" x1="248" y1="0" x2="392" y2="0"><stop offset="0" stop-color="#7f8184" stop-opacity="0"/><stop offset="0.25" stop-color="#7f8184" stop-opacity="1"/><stop offset="0.75" stop-color="#7f8184" stop-opacity="1"/><stop offset="1" stop-color="#7f8184" stop-opacity="0"/></linearGradient><linearGradient id="g11" gradientUnits="userSpaceOnUse" x1="678" y1="0" x2="700" y2="0"><stop offset="0" stop-color="#8b5a2e" stop-opacity="0"/><stop offset="1" stop-color="#8b5a2e" stop-opacity="1"/></linearGradient><filter id="bl05" filterUnits="userSpaceOnUse" x="0" y="-100" width="1200" height="900"><feGaussianBlur stdDeviation="0.5"/></filter><filter id="bl1" filterUnits="userSpaceOnUse" x="0" y="-100" width="1200" height="900"><feGaussianBlur stdDeviation="0.9"/></filter><filter id="bl15" filterUnits="userSpaceOnUse" x="0" y="-100" width="1200" height="900"><feGaussianBlur stdDeviation="1.7"/></filter><filter id="bl2" filterUnits="userSpaceOnUse" x="0" y="-100" width="1200" height="900"><feGaussianBlur stdDeviation="1.6"/></filter><filter id="bl6" filterUnits="userSpaceOnUse" x="0" y="-100" width="1200" height="900"><feGaussianBlur stdDeviation="5"/></filter><g id="art"><g filter="url(#bl6)">
<path d="M476.0 90.0C473.7 91.3 470.2 93.3 462.0 98.0C453.8 102.7 438.7 109.3 427.0 118.0C415.3 126.7 401.7 139.2 392.0 150.0C382.3 160.8 375.0 171.2 369.0 183.0C363.0 194.8 357.8 207.8 356.0 221.0C354.2 234.2 357.7 255.2 358.0 262.0" fill="none" stroke="#fff0e8" stroke-width="38" stroke-linecap="round" stroke-linejoin="round" />
<path d="M436.0 410.0C434.7 415.8 428.7 434.0 428.0 445.0C427.3 456.0 431.3 470.8 432.0 476.0" fill="none" stroke="#fff0e8" stroke-width="50" stroke-linecap="round" stroke-linejoin="round" />
<circle cx="497" cy="121" r="19" fill="#fde8dd"/>
</g>
<g filter="url(#bl1)">
<path d="M410.0 255.0C421.7 254.3 434.2 257.0 445.0 262.0C455.8 267.0 467.2 275.3 475.0 285.0C482.8 294.7 489.5 309.2 492.0 320.0C494.5 330.8 493.3 340.0 490.0 350.0C486.7 360.0 480.3 373.0 472.0 380.0C463.7 387.0 451.2 390.2 440.0 392.0C428.8 393.8 415.3 392.7 405.0 391.0C394.7 389.3 385.8 387.2 378.0 382.0C370.2 376.8 363.3 368.7 358.0 360.0C352.7 351.3 348.3 338.3 346.0 330.0C343.7 321.7 343.0 317.0 344.0 310.0C345.0 303.0 346.8 295.3 352.0 288.0C357.2 280.7 365.3 271.5 375.0 266.0C384.7 260.5 398.3 255.7 410.0 255.0Z" fill="#ffc5a1"/>
<path d="M660.0 240.0C670.8 239.7 683.0 244.0 690.0 247.0C697.0 250.0 700.3 251.7 702.0 258.0C703.7 264.3 701.3 276.7 700.0 285.0C698.7 293.3 696.7 301.0 694.0 308.0C691.3 315.0 688.3 321.3 684.0 327.0C679.7 332.7 674.3 337.2 668.0 342.0C661.7 346.8 653.3 352.3 646.0 356.0C638.7 359.7 631.0 363.7 624.0 364.0C617.0 364.3 609.7 362.3 604.0 358.0C598.3 353.7 592.7 347.7 590.0 338.0C587.3 328.3 586.3 311.7 588.0 300.0C589.7 288.3 593.8 276.5 600.0 268.0C606.2 259.5 615.0 253.7 625.0 249.0C635.0 244.3 649.2 240.3 660.0 240.0Z" fill="url(#rcheek)"/>
</g>
<path d="M319.5 266.0C319.8 262.5 319.6 253.7 321.0 245.0C322.4 236.3 324.2 226.5 328.0 214.0C331.8 201.5 337.0 183.6 344.0 170.0C351.0 156.4 358.8 144.9 370.0 132.5C381.2 120.1 397.3 105.0 411.0 95.5C424.7 86.0 437.7 80.6 452.0 75.5C466.3 70.4 489.5 66.8 497.0 65.0" fill="none" stroke="url(#g1)" stroke-width="16.5" stroke-linecap="butt" stroke-linejoin="round" />
<path d="M556.0 61.0C560.3 61.5 573.5 62.1 582.0 64.0C590.5 65.9 597.5 67.2 607.0 72.5C616.5 77.8 628.3 86.0 639.0 96.0C649.7 106.0 662.1 120.2 671.0 132.5C679.9 144.8 687.8 157.5 692.5 170.0C697.2 182.5 697.8 193.8 699.0 207.5C700.2 221.2 699.8 244.6 700.0 252.0" fill="none" stroke="url(#g2)" stroke-width="19" stroke-linecap="butt" stroke-linejoin="round" />
<path d="M324.0 302.0C324.8 304.0 325.8 308.9 328.5 314.0C331.2 319.1 335.2 326.1 340.0 332.5C344.8 338.9 350.4 346.2 357.5 352.5C364.6 358.8 373.3 365.0 382.5 370.0C391.7 375.0 402.9 379.2 412.5 382.5C422.1 385.8 431.7 388.1 440.0 390.0C448.3 391.9 454.2 392.9 462.5 393.7C470.8 394.5 485.4 394.8 490.0 395.0" fill="none" stroke="url(#g3)" stroke-width="19" stroke-linecap="butt" stroke-linejoin="round" />
<path d="M553.0 399.5C554.5 399.0 555.8 398.8 562.0 396.7C568.2 394.6 580.2 390.8 590.5 387.0C600.8 383.2 613.9 378.5 624.0 374.0C634.1 369.5 642.5 365.1 651.0 360.0C659.5 354.9 668.5 348.5 674.7 343.5C680.9 338.5 684.5 334.9 688.0 330.0C691.5 325.1 694.1 318.8 696.0 314.0C697.9 309.2 698.9 303.2 699.5 301.0" fill="none" stroke="url(#g4)" stroke-width="19" stroke-linecap="butt" stroke-linejoin="round" />
<path d="M413.0 386.0C412.2 388.3 410.2 393.9 408.0 400.0C405.8 406.1 403.0 414.2 400.0 422.5C397.0 430.8 392.3 442.4 390.0 450.0C387.7 457.6 386.5 463.3 386.0 468.0C385.5 472.7 386.0 475.5 387.0 478.0C388.0 480.5 388.2 481.4 392.0 483.0C395.8 484.6 400.8 485.1 410.0 487.5C419.2 489.9 435.0 495.0 447.5 497.5C460.0 500.0 470.4 501.7 485.0 502.7C499.6 503.7 520.4 503.9 535.0 503.5C549.6 503.1 560.0 502.7 572.5 500.0C585.0 497.3 598.6 492.2 610.0 487.5C621.4 482.8 633.3 476.2 641.0 472.0C648.7 467.8 652.7 464.8 656.0 462.0C659.3 459.2 660.5 457.3 661.0 455.0C661.5 452.7 662.3 453.7 659.0 448.0C655.7 442.3 646.2 429.3 641.0 421.0C635.8 412.7 631.2 403.8 628.0 398.0C624.8 392.2 623.0 388.0 622.0 386.0" fill="none" stroke="url(#g5)" stroke-width="17" stroke-linecap="butt" stroke-linejoin="round" mask="url(#bm)"/>
<g>
<path d="M553.0 118.0C554.7 115.8 563.8 114.7 570.0 114.5C576.2 114.3 583.3 114.8 590.0 117.0C596.7 119.2 604.7 123.8 610.0 128.0C615.3 132.2 619.2 137.7 622.0 142.0C624.8 146.3 627.0 150.2 627.0 154.0C627.0 157.8 624.8 162.2 622.0 165.0C619.2 167.8 614.3 170.2 610.0 171.0C605.7 171.8 600.5 171.2 596.0 170.0C591.5 168.8 587.2 167.8 583.0 164.0C578.8 160.2 574.8 153.0 571.0 147.0C567.2 141.0 563.0 132.8 560.0 128.0C557.0 123.2 551.3 120.2 553.0 118.0Z" fill="#7dd08c" stroke="#8f6a42" stroke-width="3.4" stroke-linejoin="round"/>
<path d="M551.0 119.0C554.2 118.3 556.5 123.2 560.0 128.0C563.5 132.8 568.5 141.0 572.0 148.0C575.5 155.0 578.8 163.0 581.0 170.0C583.2 177.0 585.0 184.5 585.0 190.0C585.0 195.5 583.5 199.5 581.0 203.0C578.5 206.5 573.8 210.0 570.0 211.0C566.2 212.0 562.2 211.2 558.0 209.0C553.8 206.8 548.3 203.2 545.0 198.0C541.7 192.8 539.5 185.7 538.0 178.0C536.5 170.3 535.5 159.7 536.0 152.0C536.5 144.3 538.5 137.5 541.0 132.0C543.5 126.5 547.8 119.7 551.0 119.0Z" fill="#7dd08c" stroke="#8f6a42" stroke-width="3.4" stroke-linejoin="round"/>
<ellipse cx="553" cy="128" rx="14" ry="20" fill="url(#hl)"/>
<path d="M497.5 117.5C497.8 116.3 497.9 112.6 499.5 110.5C501.1 108.4 504.0 106.3 507.0 105.0C510.0 103.7 513.8 102.4 517.5 102.8C521.2 103.2 525.2 105.5 529.0 107.5C532.8 109.5 535.7 111.2 540.0 114.5C544.3 117.8 550.0 121.8 555.0 127.5C560.0 133.2 565.8 141.2 570.0 148.5C574.2 155.8 577.5 164.1 580.0 171.0C582.5 177.9 584.2 186.8 585.0 190.0" fill="none" stroke="#87582e" stroke-width="4.4" stroke-linecap="round" stroke-linejoin="round" />
<path d="M497.5 117.5C497.8 116.3 497.9 112.6 499.5 110.5C501.1 108.4 504.0 106.3 507.0 105.0C510.0 103.7 513.8 102.4 517.5 102.8C521.2 103.2 525.2 105.5 529.0 107.5C532.8 109.5 535.7 111.2 540.0 114.5C544.3 117.8 550.0 121.8 555.0 127.5C560.0 133.2 565.8 141.2 570.0 148.5" fill="none" stroke="#87582e" stroke-width="4.7" stroke-linecap="round" stroke-linejoin="round" />
<path d="M497.5 117.5C497.8 116.3 497.9 112.6 499.5 110.5C501.1 108.4 504.0 106.3 507.0 105.0C510.0 103.7 513.8 102.4 517.5 102.8C521.2 103.2 525.2 105.5 529.0 107.5C532.8 109.5 535.7 111.2 540.0 114.5C544.3 117.8 550.0 121.8 555.0 127.5" fill="none" stroke="#87582e" stroke-width="5.1" stroke-linecap="round" stroke-linejoin="round" />
<path d="M497.5 117.5C497.8 116.3 497.9 112.6 499.5 110.5C501.1 108.4 504.0 106.3 507.0 105.0C510.0 103.7 513.8 102.4 517.5 102.8C521.2 103.2 525.2 105.5 529.0 107.5C532.8 109.5 535.7 111.2 540.0 114.5" fill="none" stroke="#87582e" stroke-width="5.5" stroke-linecap="round" stroke-linejoin="round" />
<path d="M497.5 117.5C497.8 116.3 497.9 112.6 499.5 110.5C501.1 108.4 504.0 106.3 507.0 105.0C510.0 103.7 513.8 102.4 517.5 102.8C521.2 103.2 525.2 105.5 529.0 107.5" fill="none" stroke="#87582e" stroke-width="5.9" stroke-linecap="round" stroke-linejoin="round" />
<path d="M497.5 117.5C497.8 116.3 497.9 112.6 499.5 110.5C501.1 108.4 504.0 106.3 507.0 105.0C510.0 103.7 513.8 102.4 517.5 102.8" fill="none" stroke="#87582e" stroke-width="6.5" stroke-linecap="round" stroke-linejoin="round" />
<path d="M497.5 117.5C497.8 116.3 497.9 112.6 499.5 110.5C501.1 108.4 504.0 106.3 507.0 105.0" fill="none" stroke="#87582e" stroke-width="7.4" stroke-linecap="round" stroke-linejoin="round" />
<path d="M497.5 117.5C497.8 116.3 497.9 112.6 499.5 110.5" fill="none" stroke="#87582e" stroke-width="9.6" stroke-linecap="round" stroke-linejoin="round" />
</g>
<path d="M508.0 55.0C508.2 57.2 508.7 64.5 509.0 68.0C509.3 71.5 509.8 74.7 510.0 76.0" fill="none" stroke="url(#g6)" stroke-width="15" stroke-linecap="round" stroke-linejoin="round" />
<ellipse cx="321.5" cy="287" rx="23.5" ry="9.3" transform="rotate(-17 321 287.5)" fill="url(#blob)" filter="url(#bl1)"/>
<path d="M286.0 221.0C283.3 221.8 275.2 224.1 270.0 226.0C264.8 227.9 258.8 230.0 255.0 232.5C251.2 235.0 247.9 237.9 247.5 241.0" fill="none" stroke="url(#g7)" stroke-width="3" stroke-linecap="butt" stroke-linejoin="round" />
<path d="M247.5 241.0C247.1 244.1 247.1 247.4 252.5 251.0C257.9 254.6 269.2 259.3 280.0 262.5C290.8 265.7 305.0 268.3 317.5 270.0C330.0 271.7 340.4 272.3 355.0 272.5C369.6 272.7 390.4 271.8 405.0 271.0C419.6 270.2 432.3 269.1 442.5 268.0C452.7 266.9 462.1 265.2 466.0 264.7" fill="none" stroke="url(#g8)" stroke-width="3" stroke-linecap="round" stroke-linejoin="round" />
<path d="M340.0 288.5C346.7 288.8 367.1 290.0 380.0 290.0C392.9 290.0 407.2 289.3 417.5 288.7C427.8 288.1 437.9 286.9 442.0 286.5" fill="none" stroke="url(#g9)" stroke-width="3.4" stroke-linecap="butt" stroke-linejoin="round" />
<path d="M248.0 289.0C253.3 290.4 268.4 295.2 280.0 297.5C291.6 299.8 305.0 301.5 317.5 302.5C330.0 303.5 342.6 303.7 355.0 303.7C367.4 303.7 385.8 302.5 392.0 302.3" fill="none" stroke="url(#g10)" stroke-width="3.2" stroke-linecap="butt" stroke-linejoin="round" />
<path d="M676.0 261.5C680.0 262.7 692.4 265.9 700.0 268.7C707.6 271.5 717.9 276.7 721.5 278.3" fill="none" stroke="url(#g11)" stroke-width="13" stroke-linecap="round" stroke-linejoin="round" filter="url(#bl15)"/>
<path d="M676.0 287.0C680.0 287.9 693.9 290.6 700.0 292.5C706.1 294.4 710.4 297.3 712.5 298.3" fill="none" stroke="url(#g11)" stroke-width="12.5" stroke-linecap="round" stroke-linejoin="round" filter="url(#bl15)"/>
<ellipse cx="495" cy="293" rx="35.5" ry="39.5" fill="#fff" filter="url(#bl2)"/>
<ellipse cx="495" cy="293" rx="33.2" ry="37.3" fill="#8c7b6f" filter="url(#bl1)"/>
<ellipse cx="603" cy="284" rx="34.3" ry="40" fill="#7c6a5c" filter="url(#bl1)" transform="rotate(-6 603 284)"/>
<path d="M535.5 335.5 L545 325.3 L558.5 331.8" fill="none" stroke="#f04654" stroke-width="3" stroke-linecap="round" stroke-linejoin="round" filter="url(#bl1)" opacity=".92"/>
<text x="275" y="410" font-family="Liberation Sans, sans-serif" font-size="20" fill="#cd6565" textLength="101" lengthAdjust="spacingAndGlyphs">đou rou tak</text>
<text x="657" y="385" font-family="Liberation Sans, sans-serif" font-size="19.5" fill="#cd6565" textLength="187" lengthAdjust="spacingAndGlyphs">@Sâu-Caterpillo2911</text>
<text x="657" y="404" font-family="Liberation Sans, sans-serif" font-size="19.5" fill="#cd6565" textLength="68" lengthAdjust="spacingAndGlyphs">#HD247</text></g></defs>
<use href="#art"/>
</svg>
</div>
<!-- scrollbars -->
<div class="a" style="left:857px;top:70.5px;width:10px;height:446.5px;background:#333"></div>
<div class="a" style="left:858px;top:238px;width:8.5px;height:88px;background:#6a6a6a;border-radius:2px"></div>
<div class="a" style="left:859px;top:73px;width:0;height:0;border-left:3px solid transparent;border-right:3px solid transparent;border-bottom:4px solid #b8b8b8"></div>
<div class="a" style="left:185.5px;top:517px;width:681.5px;height:10px;background:#343434"></div>
<div class="a" style="left:436px;top:518px;width:146.5px;height:8.5px;background:#6e6e6e;border-radius:2px"></div>
<div class="a" style="left:187px;top:519px;width:0;height:0;border-top:3px solid transparent;border-bottom:3px solid transparent;border-right:4px solid #9ab"></div>
<div class="a" style="left:860px;top:519px;width:0;height:0;border-top:3px solid transparent;border-bottom:3px solid transparent;border-left:4px solid #b8b8b8"></div>

<!-- ======= navigator ======= -->
<div class="panel" style="left:867px;top:56px;width:157px;height:149px;background:#1f1f1f"></div>
<div class="panel" style="left:870.5px;top:56px;width:153.5px;height:149px"></div>
<div class="hdr" style="left:870.5px;top:56.5px;width:153.5px"><div class="t" style="left:52.70px;top:1.76px;font-size:9.3px;color:#cfcfcf;transform-origin:0 50%;transform:scaleX(0.9036);">Hoa tiêu</div><svg class="a" style="right:1px;top:2px" width="20" height="9" viewBox="0 0 20 9"><path d="M2.500 3.500h3.500v3.500h-3.500zM4.300 3.500v-1.500h3.200v3.200h-1.500" fill="none" stroke="#a8a8a8" stroke-width=".75"/><path d="M13.300 2.300l4 4.400M17.300 2.300l-4 4.400" stroke="#d2d2d2" stroke-width="1.350"/></svg></div>
<div class="sb" style="left:873px;top:71.5px;width:17px;height:16.5px;background:#4a4a4a"><svg width="17" height="16.5" viewBox="0 0 17 16.5"><circle cx="7.500" cy="7.500" r="4.300" fill="none" stroke="#eee" stroke-width="1.400"/><path d="M10.500 10.500l3.500 3.500" stroke="#eee" stroke-width="1.800"/><path d="M7.700 5.500v4" stroke="#eee" stroke-width="1.100"/></svg></div>
<div class="a" style="left:892.500px;top:74px;width:1px;height:11px;background:#444"></div><div class="sb" style="left:895.5px;top:71.5px;width:16.5px;height:16.5px;background:#4a4a4a"><svg width="16.5" height="16.5" viewBox="0 0 16.5 16.5"><circle cx="7.500" cy="7.500" r="4.300" fill="none" stroke="#eee" stroke-width="1.400"/><path d="M10.500 10.500l3.500 3.500" stroke="#eee" stroke-width="1.800"/><path d="M5.500 7.500h4M7.500 5.500v4" stroke="#eee" stroke-width="1.100"/></svg></div>
<div class="sb" style="left:914px;top:71.5px;width:16.5px;height:16.5px;background:#4a4a4a"><svg width="16.5" height="16.5" viewBox="0 0 16.5 16.5"><rect x="2.500" y="3" width="11.500" height="10.500" fill="none" stroke="#ddd" stroke-width="1"/><path d="M4 4.500l3 3M12.500 4.500l-3 3M4 12l3-3M12.500 12l-3-3" stroke="#eee" stroke-width="1.200"/><path d="M4 4.500h2.200M4 4.500v2.200M12.500 4.500h-2.200M12.500 4.500v2.200M4 12h2.200M4 12v-2.200M12.500 12h-2.200M12.500 12v-2.200" stroke="#eee" stroke-width="1"/></svg></div>
<div class="sb" style="left:933px;top:71.5px;width:16.5px;height:16.5px;background:#4a4a4a"><svg width="16.5" height="16.5" viewBox="0 0 16.5 16.5"><circle cx="7.500" cy="7.500" r="4.300" fill="none" stroke="#eee" stroke-width="1.400"/><path d="M10.500 10.500l3.500 3.500" stroke="#eee" stroke-width="1.800"/><path d="M5.500 7.500h4" stroke="#eee" stroke-width="1.100"/></svg></div>
<div class="a" style="left:952px;top:74px;width:1px;height:11px;background:#444"></div><div class="sb" style="left:955px;top:71.5px;width:17px;height:16.5px;background:#4a4a4a"><svg width="17" height="16.5" viewBox="0 0 17 16.5"><path d="M3.500 8.500a5 5 0 1 0 2-4" fill="none" stroke="#eee" stroke-width="1.400"/><path d="M3 2.500l.5 3.800 3.500-1z" fill="#eee"/><rect x="6" y="6.200" width="5" height="4.300" fill="#eee" transform="rotate(-18 8.500 8.300)"/></svg></div>
<div class="sb" style="left:974px;top:71.5px;width:17px;height:16.5px;background:#161616"><svg width="17" height="16.5" viewBox="0 0 17 16.5"><rect x="4.500" y="4" width="8" height="8" fill="#eee"/><rect x="6.500" y="6.500" width="4" height="3" fill="#999"/><path d="M2.500 2l3 2.500M14.500 2l-3 2.500M2.500 14l3-2.500M14.500 14l-3-2.500" stroke="#eee" stroke-width="1.300"/></svg></div>
<div class="sb" style="left:992.5px;top:71.5px;width:16.5px;height:16.5px;background:#4a4a4a"><svg width="16.5" height="16.5" viewBox="0 0 16.5 16.5"><g transform="translate(16.500 0) scale(-1 1)"><path d="M3.500 8.500a5 5 0 1 0 2-4" fill="none" stroke="#eee" stroke-width="1.400"/><path d="M3 2.500l.5 3.800 3.500-1z" fill="#eee"/><rect x="6" y="6.200" width="5" height="4.300" fill="#eee" transform="rotate(-18 8.500 8.300)"/></g></svg></div>
<div class="a" style="left:1015px;top:71.500px;width:9px;height:16.500px;background:#4a4a4a"></div>
<div class="a" style="left:874px;top:90px;width:147px;height:112px;background:#fff;overflow:hidden">
<svg class="a" style="left:0;top:0" width="147" height="112" viewBox="70.4 -51.5 1057.5 805.7"><use href="#art"/><rect x="185.5" y="70.5" width="671.5" height="446.5" fill="none" stroke="#e3222b" stroke-width="7.500"/></svg>
</div>

<!-- ======= layer panel ======= -->
<div class="panel" style="left:870.5px;top:205px;width:153.5px;height:322px"></div>
<div class="hdr" style="left:870.5px;top:205.5px;width:153.5px"><div class="t" style="left:62.10px;top:1.76px;font-size:9.3px;color:#cfcfcf;transform-origin:0 50%;transform:scaleX(0.7901);">Lớp</div><svg class="a" style="right:1px;top:2px" width="20" height="9" viewBox="0 0 20 9"><path d="M2.500 3.500h3.500v3.500h-3.500zM4.300 3.500v-1.500h3.200v3.200h-1.500" fill="none" stroke="#a8a8a8" stroke-width=".75"/><path d="M13.300 2.300l4 4.400M17.300 2.300l-4 4.400" stroke="#d2d2d2" stroke-width="1.350"/></svg></div>
<div class="t" style="left:874.00px;top:224.51px;font-size:9.8px;color:#d8d8d8;transform-origin:0 50%;transform:scaleX(0.8941);">Độ trong</div>
<div class="a" style="left:913px;top:223px;width:77.5px;height:12px;background:linear-gradient(to right,#84c8fa,#4f9fe2)"></div>
<div class="t" style="left:995.70px;top:224.51px;font-size:9.8px;color:#d8d8d8;transform-origin:0 50%;transform:scaleX(0.8999);">100 %</div>
<div class="t" style="left:874.00px;top:242.51px;font-size:9.8px;color:#d8d8d8;transform-origin:0 50%;transform:scaleX(0.8638);">Pha trộn</div>
<div class="a" style="left:914.5px;top:241px;width:106.5px;height:12.5px;background:#484848;"><div class="t" style="left:2.00px;top:1.51px;font-size:9.8px;color:#d8d8d8;transform-origin:0 50%;transform:scaleX(0.8337);">Bình thường</div><span style="position:absolute;right:3px;top:5px;width:0;height:0;border-left:2.5px solid transparent;border-right:2.5px solid transparent;border-top:3px solid #aaa"></span></div>
<div class="a" style="left:877px;top:263px;width:6px;height:6px;border:1px solid #4a4a4a"></div>
<div class="t" style="left:886.00px;top:261.36px;font-size:9.5px;color:#686868;transform-origin:0 50%;transform:scaleX(0.8744);">Bảo vệ alpha</div>
<div class="a" style="left:943px;top:263px;width:6px;height:6px;border:1px solid #ddd"></div>
<div class="t" style="left:952.60px;top:261.36px;font-size:9.5px;color:#e0e0e0;transform-origin:0 50%;transform:scaleX(0.8664);">Xén bớt</div>
<div class="a" style="left:990px;top:263px;width:6px;height:6px;border:1px solid #ddd"></div>
<div class="t" style="left:1000.00px;top:261.36px;font-size:9.5px;color:#e0e0e0;transform-origin:0 50%;transform:scaleX(0.8789);">Khóa</div>
<div class="a" style="left:871px;top:275px;width:142px;height:232px;background:#444"></div>
<div class="lrow" style="top:275px"><div class="eye"></div><div class="th"><svg width="28" height="21"><circle cx="12" cy="9" r="1" fill="#777"/><circle cx="15.5" cy="9" r="1" fill="#777"/></svg></div><div class="t" style="left:70.00px;top:10.63px;font-size:11.0px;color:#eee;transform-origin:0 50%;transform:scaleX(0.8601);">Lớp2</div></div>
<div class="lrow" style="top:307px"><div class="eye"></div><div class="th"><svg width="28" height="21"><path d="M9 10a5 5 0 1 1 10 0c0 2-2 3-2 5h-6c0-2-2-3-2-5z" fill="none" stroke="#a98a6a" stroke-width=".8" stroke-dasharray="2 1"/></svg></div><div class="t" style="left:70.00px;top:10.63px;font-size:11.0px;color:#eee;transform-origin:0 50%;transform:scaleX(0.8601);">Lớp1</div></div>
<div class="lrow" style="top:339px"><div class="eye"></div><div class="th"><svg width="28" height="21"><ellipse cx="10.5" cy="10.5" rx="2.5" ry="1.6" fill="#ffc5a1"/><ellipse cx="17.5" cy="10.5" rx="2.5" ry="1.6" fill="#ffc5a1"/></svg></div><div class="t" style="left:70.00px;top:10.63px;font-size:11.0px;color:#eee;transform-origin:0 50%;transform:scaleX(0.8601);">Lớp3</div></div>
<div class="lrow" style="top:371px"><div class="a" style="left:17px;top:0;width:125px;height:32px;background:#4b93d4"></div><div class="eye"></div><div class="a" style="left:28px;top:13px;width:28px;height:5.5px;background:repeating-linear-gradient(90deg,#f6d6d0 0 1.5px,#e9a59c 1.5px 2.3px,#fdeeea 2.3px 3.5px)"></div><div class="a" style="left:70px;top:0;width:56px;height:32px;overflow:hidden"><div class="t" style="left:0.00px;top:10.63px;font-size:11.0px;color:#fff;font-weight:bold;transform-origin:0 50%;transform:scaleX(0.9984);">@Sâu-Caterpillo2911</div></div>
  <svg class="a" style="left:122px;top:7px" width="18" height="18" viewBox="0 0 12 12"><circle cx="6" cy="6" r="3.6" fill="none" stroke="#fff" stroke-width="2.8" stroke-dasharray="1.9 0.93"/><circle cx="6" cy="6" r="2.8" fill="#fff"/><circle cx="6" cy="6" r="1.2" fill="#4b93d4"/></svg></div>
<div class="lrow" style="top:403px"><div class="eye"></div><div class="a" style="left:28px;top:13px;width:28px;height:5.5px;background:repeating-linear-gradient(90deg,#f6d6d0 0 1.5px,#e39a90 1.5px 2.3px,#fdeeea 2.3px 3.5px)"></div><div class="t" style="left:70.00px;top:10.63px;font-size:11.0px;color:#eee;transform-origin:0 50%;transform:scaleX(0.9810);">đou rou tak</div></div>
<div class="lrow" style="top:435px"><div class="eye"></div><div class="th"><svg width="28" height="21"><path d="M11 6c-2 2-2 6 0 9M13 6c2 1 3 3 2 5" fill="none" stroke="#f5c9ad" stroke-width=".9"/></svg></div><div class="t" style="left:70.00px;top:10.63px;font-size:11.0px;color:#eee;transform-origin:0 50%;transform:scaleX(0.8601);">Lớp4</div></div>
<div class="a" style="left:1013px;top:275px;width:11px;height:232px;background:#333"></div>
<div class="a" style="left:1014px;top:283px;width:9px;height:212px;background:#6c6c6c;border-radius:2px"></div>
<div class="a" style="left:1015.5px;top:277.5px;width:0;height:0;border-left:3px solid transparent;border-right:3px solid transparent;border-bottom:4px solid #b8b8b8"></div>
<div class="a" style="left:1015.5px;top:501px;width:0;height:0;border-left:3px solid transparent;border-right:3px solid transparent;border-top:4px solid #b8b8b8"></div>
<div class="sb" style="left:874px;top:508.5px;width:16.5px;height:16.5px;background:#4a4a4a"><svg width="16.5" height="16.5" viewBox="0 0 16.5 16.5"><path d="M3.500 2.500h6l3.500 3.500v8h-9.500z" fill="none" stroke="#eee" stroke-width="1.200"/><path d="M9.500 2.500v3.500h3.500" fill="none" stroke="#eee" stroke-width=".8"/></svg></div>
<div class="sb" style="left:893px;top:508.5px;width:16.5px;height:16.5px;background:#4a4a4a"><svg width="16.5" height="16.5" viewBox="0 0 16.5 16.5"><path d="M3.500 2.500h6l3.500 3.500v8h-9.500z" fill="none" stroke="#eee" stroke-width="1.200"/><path d="M9.500 2.500v3.500h3.500" fill="none" stroke="#eee" stroke-width=".8"/><text x="8.200" y="12.500" text-anchor="middle" font-size="6.500" font-family="Liberation Sans, sans-serif" font-weight="bold" fill="#eee">8</text></svg></div>
<div class="sb" style="left:911.5px;top:508.5px;width:16.5px;height:16.5px;background:#4a4a4a"><svg width="16.5" height="16.5" viewBox="0 0 16.5 16.5"><path d="M3.500 2.500h6l3.500 3.500v8h-9.500z" fill="none" stroke="#eee" stroke-width="1.200"/><path d="M9.500 2.500v3.500h3.500" fill="none" stroke="#eee" stroke-width=".8"/><text x="8.200" y="12.500" text-anchor="middle" font-size="6.500" font-family="Liberation Sans, sans-serif" font-weight="bold" fill="#eee">1</text></svg></div>
<div class="sb" style="left:930px;top:508.5px;width:19.5px;height:16.5px;background:#4a4a4a"><svg width="19.5" height="16.5" viewBox="0 0 19.5 16.5"><path d="M3.500 2.800h4.500l2.500 2.500v5" fill="none" stroke="#ccc" stroke-width="1.100"/><path d="M3.500 2.800v9h3" fill="none" stroke="#ccc" stroke-width="1.100"/><path d="M9.500 9.500v5M7 12h5" stroke="#eee" stroke-width="1.400"/><path d="M14 11h3.500l-1.700 2z" fill="#eee"/></svg></div>
<div class="sb" style="left:952.5px;top:508.5px;width:16.5px;height:16.5px;background:#4a4a4a"><svg width="16.5" height="16.5" viewBox="0 0 16.5 16.5"><path d="M3 4.500h4.500l1.300 1.500h4.700v7.500h-10.500z" fill="#eee"/></svg></div>
<div class="a" style="left:972px;top:511px;width:1px;height:11px;background:#555"></div><div class="sb" style="left:975px;top:508.5px;width:16.5px;height:16.5px;background:#4a4a4a"><svg width="16.5" height="16.5" viewBox="0 0 16.5 16.5"><rect x="6.500" y="3.500" width="7" height="7" fill="none" stroke="#eee" stroke-width="1.100" rx="1"/><rect x="4" y="6" width="7" height="7" fill="#4a4a4a" stroke="#eee" stroke-width="1.100" rx="1"/></svg></div>
<div class="sb" style="left:994px;top:508.5px;width:16px;height:16.5px;background:#1a1a1a"><svg width="16" height="16.5" viewBox="0 0 16 16.5"><rect x="3" y="3" width="3" height="3" fill="none" stroke="#eee" stroke-width=".9"/><rect x="3" y="10" width="3" height="3" fill="none" stroke="#eee" stroke-width=".9"/><path d="M4.500 6v4M6 8h3" stroke="#eee" stroke-width=".9"/><rect x="9" y="6" width="4.500" height="4" fill="#eee"/></svg></div>
<div class="a" style="left:1014.500px;top:508.500px;width:9.500px;height:16.500px;background:#4a4a4a"></div>
<!-- watermark overlay on the right panel -->
<div class="a" style="left:799px;top:480px;width:58px;height:40px;overflow:hidden"><div class="t" style="left:0.00px;top:4.88px;font-size:15.6px;color:#b4b4b4;transform-origin:0 50%;transform:scaleX(1.0198);">Activate Windows</div><div class="t" style="left:0.00px;top:26.23px;font-size:11.0px;color:#b9b9b9;transform-origin:0 50%;transform:scaleX(1.0309);">Go to Settings to activate Windows.</div></div>
<div class="a" style="left:857px;top:480px;width:167px;height:40px;overflow:hidden"><div class="t" style="left:-58.00px;top:4.88px;font-size:15.6px;color:rgba(190,190,190,.42);transform-origin:0 50%;transform:scaleX(1.0198);">Activate Windows</div><div class="t" style="left:-58.00px;top:26.23px;font-size:11.0px;color:rgba(190,190,190,.42);transform-origin:0 50%;transform:scaleX(1.0309);">Go to Settings to activate Windows.</div></div>

<!-- ======= status bar ======= -->
<div class="a" style="left:0;top:527px;width:1024px;height:17px;background:#212121"></div>
<div class="t" style="left:4.00px;top:532.31px;font-size:9.6px;color:#c4c4c4;transform-origin:0 50%;transform:scaleX(0.9912);">1300 * 1000 pixel</div><div class="t" style="left:86.00px;top:532.31px;font-size:9.6px;color:#c4c4c4;transform-origin:0 50%;transform:scaleX(0.9559);">(9.4 * 7.3cm)</div><div class="t" style="left:147.00px;top:532.31px;font-size:9.6px;color:#c4c4c4;transform-origin:0 50%;transform:scaleX(1.0164);">350 dpi</div><div class="t" style="left:187.50px;top:532.31px;font-size:9.6px;color:#c4c4c4;transform-origin:0 50%;transform:scaleX(0.9742);">150 %</div><div class="t" style="left:222.00px;top:532.31px;font-size:9.6px;color:#c4c4c4;transform-origin:0 50%;transform:scaleX(0.9780);">( 648, 449 )</div>

<!-- ======= taskbar ======= -->
<div class="a" style="left:0;top:544px;width:1024px;height:32px;background:linear-gradient(to right,#1c3443,#182a3c 60%,#16273a)"></div>
<svg class="a" style="left:13px;top:553.500px" width="14" height="14" viewBox="0 0 14 14" fill="#fff"><path d="M0 2l5.800-.8v5.500H0zM6.600 1.100L14 0v6.700H6.600zM0 7.500h5.800v5.500L0 12.200zM6.600 7.500H14V14l-7.400-1z"/></svg>
<div class="a" style="left:39px;top:545px;width:274px;height:31px;background:#f3f3f3"></div>
<svg class="a" style="left:47px;top:552px" width="16" height="16" viewBox="0 0 16 16" fill="none" stroke="#333" stroke-width="1.200"><circle cx="9.500" cy="6.500" r="4.200"/><path d="M6.500 9.500l-4.500 4.800"/></svg>
<div class="t" style="left:70.00px;top:554.94px;font-size:12.0px;color:#3a3a3a;transform-origin:0 50%;transform:scaleX(0.9994);">Type here to search</div>
<div class="a" style="left:327px;top:554px;width:12.500px;height:12.500px;border-radius:50%;border:2px solid #fff"></div>
<svg class="a" style="left:362px;top:552px" width="18" height="16" viewBox="0 0 18 16" fill="none" stroke="#d8dde2" stroke-width="1.100"><rect x="4" y="4.500" width="7.500" height="7"/><path d="M2.500 3v1.500h10.500v-1.500M2.500 13v-1.500h10.500v1.500M15 3.500v1.500M15 7v6"/></svg>
<svg class="a" style="left:401px;top:550px" width="22" height="20" viewBox="0 0 22 20"><path d="M1 9l10-8 10 8v9H1z" fill="#1e7ad0"/><path d="M3 8.500h16v6H3z" fill="#f4faff"/><path d="M1 18.500V9l10 7.200L21 9v9.500z" fill="#43a8f0"/></svg>
<div class="a" style="left:441.500px;top:551.500px;width:17.500px;height:17.500px;border-radius:5.500px;background:#4a8cf7"><svg width="17.500" height="17.500" viewBox="0 0 17.500 17.500"><rect x="3.800" y="6" width="6.700" height="5.500" rx="1.200" fill="#fff"/><path d="M11 8l3-1.800v5.100L11 9.500z" fill="#fff"/></svg></div>
<svg class="a" style="left:479px;top:550px" width="21" height="21" viewBox="0 0 21 21"><defs><linearGradient id="eg1" x1="0" y1="0" x2="1" y2="1"><stop offset="0" stop-color="#35c1f1"/><stop offset="1" stop-color="#0c59a4"/></linearGradient><linearGradient id="eg2" x1="0" y1="0" x2="1" y2="0"><stop offset="0" stop-color="#37bdee"/><stop offset="1" stop-color="#5fd35a"/></linearGradient></defs><circle cx="10.500" cy="10.500" r="9.500" fill="url(#eg1)"/><path d="M1.500 8.500C3 3 9 .500 14 2.500c3.500 1.500 5.500 4.500 5.500 7.500 0 2.500-2 4-4.500 4-2 0-3-1-3-2 0-.800.500-1 .500-2 0-1.500-1.500-3-3.500-3-3 0-5.500 1.500-7.500 1.500z" fill="url(#eg2)"/><path d="M9 10.500c0 4 3 6.500 7 6-2 2.500-7 3.500-10.500.500C3.500 15 3.500 11.500 5.500 9.500c1-1 2.500-1.500 3.500-1.300-.5.800 0 1.500 0 2.300z" fill="#0f5fae"/></svg>
<svg class="a" style="left:518px;top:549px" width="21" height="22" viewBox="0 0 21 22"><path d="M6.500 7V5a4 4 0 0 1 8 0v2" fill="none" stroke="#f2f2f2" stroke-width="1.400"/><path d="M2 6.500h17V21H2z" fill="#f5f5f5"/><rect x="7" y="10" width="3.200" height="3.200" fill="#f25022"/><rect x="10.900" y="10" width="3.200" height="3.200" fill="#7fba00"/><rect x="7" y="13.900" width="3.200" height="3.200" fill="#00a4ef"/><rect x="10.900" y="13.900" width="3.200" height="3.200" fill="#ffb900"/></svg>
<svg class="a" style="left:557px;top:551px" width="21" height="18" viewBox="0 0 21 18"><g fill="#f1ebe6" stroke="#c8bdb5" stroke-width=".5"><rect x="1" y="1.500" width="8.500" height="7.500" rx="1"/><rect x="11" y="1.500" width="8.500" height="7.500" rx="1"/><rect x="6" y="9.500" width="8.500" height="7.500" rx="1"/></g><g fill="#c0392b" font-size="4.500" font-family="Liberation Sans, sans-serif" font-weight="bold"><text x="3.500" y="7">M</text><text x="13.800" y="7">E</text><text x="8.700" y="15">B</text></g></svg>
<div class="a" style="left:588px;top:544px;width:37.500px;height:32px;background:#3b4c5b"></div>
<div class="a" style="left:597.500px;top:551.500px;width:18.500px;height:18.500px;border-radius:3.500px;background:#f4f4f4"><svg width="18.500" height="18.500" viewBox="0 0 18.500 18.500"><circle cx="9.300" cy="9.700" r="5.800" fill="#2a9bd8"/><path d="M9.300 3.900A5.800 5.800 0 0 0 3.800 11.500L9.300 9.700Z" fill="#ea3c3c"/><path d="M9.300 3.900A5.800 5.800 0 0 1 14.800 11.500L9.300 9.700Z" fill="#f3c330"/><path d="M3.800 11.500A5.800 5.800 0 0 0 14.800 11.500L9.300 9.700Z" fill="#2fb46a"/><path d="M7 6c1-2.500 3.500-3 4.500-2-2 .500-2.500 2.500-2.200 4z" fill="#f26a3a"/></svg></div>
<svg class="a" style="left:634.500px;top:550.500px" width="21" height="19" viewBox="0 0 21 19"><path d="M1 2.500h6.500l1.500 2H20V17H1z" fill="#e9a825"/><path d="M1 6h19v11H1z" fill="#fbd250"/><path d="M5 10.500h11v6.500H5z" fill="#2f8ad7"/><path d="M7.500 13h6v4h-6z" fill="#fbd250"/></svg>
<svg class="a" style="left:673.500px;top:550px" width="21" height="21" viewBox="0 0 21 21"><circle cx="10" cy="11" r="8.500" fill="#7ab733"/><circle cx="9.500" cy="11.500" r="4.500" fill="none" stroke="#fff" stroke-width="1.800"/><circle cx="9.500" cy="11.500" r="1.600" fill="#fff"/><path d="M11 9l8-8v9z" fill="#f4f9ee"/><path d="M13 8l4.500-4.500M14.500 9.500l4-2.500M12 6.500l2.500-4" stroke="#d2452f" stroke-width="1.100"/></svg>
<svg class="a" style="left:711px;top:549px" width="23" height="23" viewBox="0 0 23 23"><path d="M5 2.500h13a3.500 3.500 0 0 1 3.500 3.500v9a3.500 3.500 0 0 1-3.500 3.500h-8l-4.500 3v-3.200A3.500 3.500 0 0 1 1.500 15V6A3.500 3.500 0 0 1 5 2.500z" fill="#fff" stroke="#2f6be8" stroke-width="1.600"/><text x="11.500" y="12.800" text-anchor="middle" font-size="6.500" font-weight="bold" font-family="Liberation Sans, sans-serif" fill="#2f6be8">Zalo</text></svg>
<div class="a" style="left:588px;top:574px;width:37.5px;height:2px;background:#7cbcf0"></div>
<div class="a" style="left:668px;top:574px;width:31px;height:2px;background:#7cbcf0"></div>
<div class="a" style="left:706px;top:574px;width:31px;height:2px;background:#7cbcf0"></div>
<svg class="a" style="left:765px;top:551px" width="18" height="18" viewBox="0 0 18 18"><path d="M9.500 1.500a6.500 6.500 0 1 1-7.500 10c5 1 9-3.500 7.500-10z" fill="#fcd635"/></svg>
<div class="t" style="left:789.40px;top:554.63px;font-size:11.0px;color:#fff;transform-origin:0 50%;transform:scaleX(0.9546);">77°F</div>
<svg class="a" style="left:824px;top:555px" width="12" height="9" viewBox="0 0 12 9" fill="none" stroke="#eee" stroke-width="1.100"><path d="M1.500 7L6 2.500 10.500 7"/></svg>
<svg class="a" style="left:841px;top:553px" width="17" height="12" viewBox="0 0 17 12"><rect x="4" y="3" width="11.500" height="6.500" fill="#e8e8e8" stroke="#fff" stroke-width=".8"/><rect x="15.800" y="5" width="1" height="2.500" fill="#fff"/><path d="M1 3.500h3.500M1 5.500h3.500M2.500 3.500v-1.500M2.500 5.500v3.500" stroke="#eee" stroke-width=".9" fill="none"/></svg>
<svg class="a" style="left:860px;top:551px" width="17" height="17" viewBox="0 0 17 17" fill="none" stroke="#eee" stroke-width="1"><path d="M2 4.500l10.500-1.500v10l-10.500-1.500z"/><path d="M6 7.500h3M6 7.500v3h3"/><circle cx="12.500" cy="12.500" r="3" fill="#f28b1e" stroke="none"/></svg>
<svg class="a" style="left:881px;top:552px" width="15" height="14" viewBox="0 0 15 14" fill="none" stroke="#9aa4ad" stroke-width="1.100"><path d="M1.500 12.500A11 11 0 0 1 12.500 1.500"/><path d="M4.500 12.500A8 8 0 0 1 12.500 4.500"/><path d="M7.500 12.500A5 5 0 0 1 12.500 7.500"/><circle cx="11.800" cy="11.800" r="1" fill="#eee" stroke="none"/></svg>
<div class="t" style="left:902.00px;top:555.31px;font-size:9.6px;color:#fff;transform-origin:0 50%;transform:scaleX(0.8896);">ENG</div>
<div class="t" style="left:936.60px;top:548.61px;font-size:9.6px;color:#fff;transform-origin:0 50%;transform:scaleX(0.9772);">1:13 AM</div><div class="t" style="left:929.00px;top:563.01px;font-size:9.6px;color:#fff;transform-origin:0 50%;transform:scaleX(1.0143);">10/28/2021</div>
<svg class="a" style="left:987px;top:551px" width="22" height="20" viewBox="0 0 22 20"><path d="M1.500 1.500h13v10.500h-8.500l-2.500 2.500v-2.500h-2z" fill="#f4f4f4"/><path d="M4 4.500h8M4 6.700h8M4 8.900h5" stroke="#1a2d3d" stroke-width=".8"/><circle cx="14.500" cy="13.500" r="4.800" fill="#1a2d3d" stroke="#cfd6dc" stroke-width=".9"/><text x="14.500" y="16.300" text-anchor="middle" font-size="7.500" fill="#fff" font-family="Liberation Sans, sans-serif">2</text></svg>
<div class="a" style="left:1019.500px;top:544px;width:1px;height:32px;background:#7a8894"></div>

</body></html>
